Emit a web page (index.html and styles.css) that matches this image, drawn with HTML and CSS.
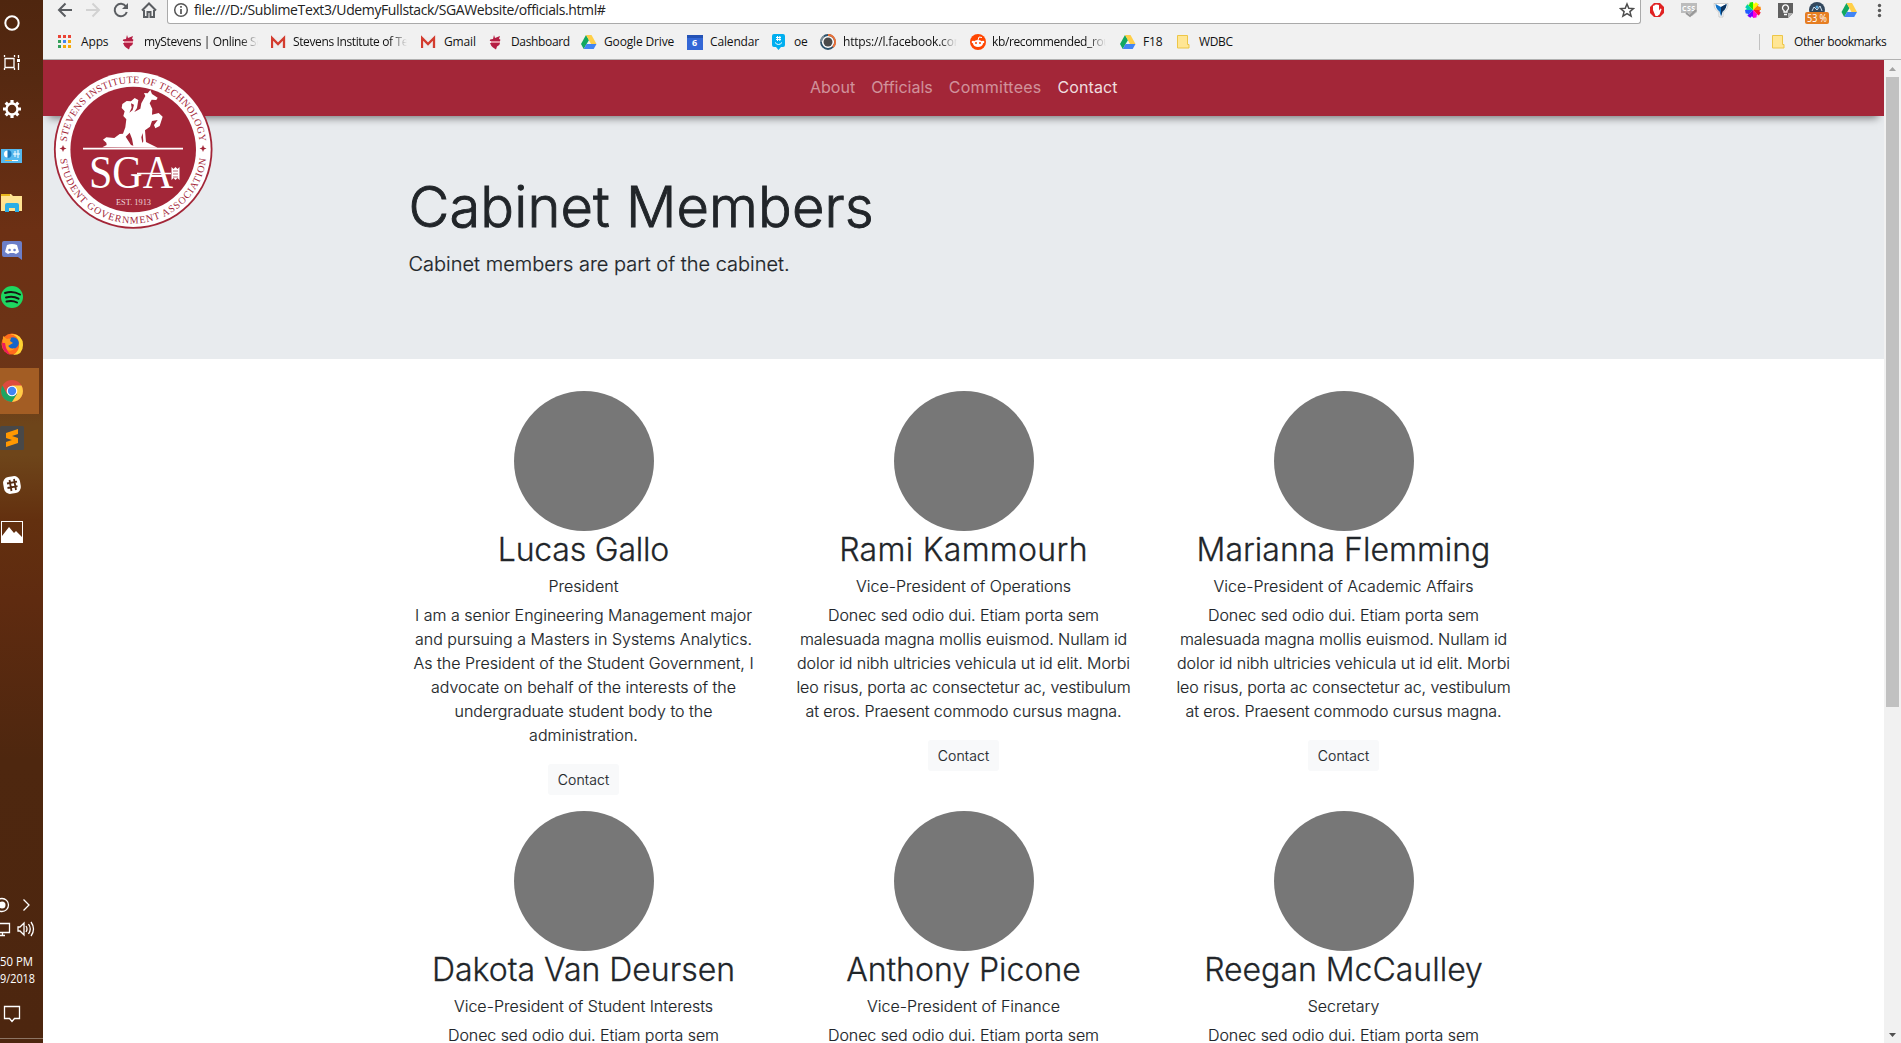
FILE: index.html
```html
<!DOCTYPE html>
<html lang="en"><head><meta charset="utf-8"><title>Officials</title><link rel="stylesheet" href="styles.css"></head>
<body>
<div class="screen">
<aside class="taskbar">
<svg width="43" height="1043" viewBox="0 0 43 1043">
<rect class="active" x="0" y="368" width="39" height="46"/><path d="M39.5 368v46" stroke="#6b3714"/>
<circle cx="12" cy="23" r="6.7" fill="none" stroke="#fff" stroke-width="2"/>
<g fill="none" stroke="#fff" stroke-width="1.3"><path d="M5 58.500h9v9h-9zM4.500 55v2M14.500 55v2M4.500 70v-2M14.500 70v-2M18.500 55v3M18.500 63v7"/></g><rect x="17" y="59" width="3" height="3" fill="#fff"/>
<g stroke="#fff" fill="none"><circle cx="12" cy="109" r="5.500" stroke-width="2.400"/><g stroke-width="3.200"><path d="M12 100v3M12 115v3M3 109h3M18 109h3M5.700 102.700l2 2M16.300 113.300l2 2M5.700 115.300l2-2M16.300 104.700l2-2"/></g></g>
<rect x="1" y="149" width="21" height="14" fill="#55b9ef"/><circle cx="7.500" cy="154" r="3.500" fill="#fff"/><path d="M7.500 154v-4a4 4 0 0 1 0 8z" fill="#1879be"/><path d="M13 154h7M15 151v6M18 150v8" stroke="#fff"/><path d="M5 160.500h7" stroke="#f0b545"/><path d="M12 160.500h6" stroke="#fff"/>
<path d="M1 194h10l2 2h9v15H1z" fill="#ffe391"/><path d="M1 194h9v2H1z" fill="#e8b71d"/><path d="M5 205q0-2 2-2h10q2 0 2 2v7h-4v-4H9v4H5z" fill="#2aaee6"/>
<path d="M4 241h16q2 0 2 2v17l-4-3H4q-2 0-2-2v-12q0-2 2-2z" fill="#6c7fc9"/><path d="M7 245q5-2 10 0l2 7-3 2-2-1H10l-2 1-3-2z" fill="#fff"/><path d="M9.500 250h.1M14.500 250h.1" stroke="#6c7fc9" stroke-width="2.500" stroke-linecap="round"/>
<circle cx="12" cy="297" r="11" fill="#1ed760"/><path d="M5 293q8-2.500 15 1.500M6 297.500q7-2 12.500 1.200M6.500 301.500q6-1.500 10.500 1" fill="none" stroke="#191414" stroke-width="2" stroke-linecap="round"/>
<circle cx="12" cy="344" r="10.500" fill="#ff6b1c"/><path d="M12 334q11 1 11 11t-10 10q7-4 6-12t-9-9z" fill="#ffd332"/><circle cx="13" cy="343" r="5.800" fill="#1465c8"/><path d="M3 336l4 3 4-1-1 3 3 2-5 3q2 4 7 2-4 5-9 1-4-4-3-13z" fill="#ff9a1c"/><path d="M2 343q0 10 9 12-5-4-6-12z" fill="#ed1c5c"/>
<g transform="translate(12 391)"><circle r="11" fill="#dd4b3e"/><path d="M-9.500-5.500A11 11 0 0 0 0 11L5 3-5 3z" fill="#1da462"/><path d="M0 11A11 11 0 0 0 9.500-5.500H0L5 3z" fill="#ffcd46"/><circle r="5.300" fill="#fff"/><circle r="4.200" fill="#4285f4"/></g>
<rect x="0" y="426" width="24" height="24" rx="1.500" fill="#484848"/><path d="M6 433l12-4v5l-6 2 6 2v5L6 447v-5l6-2-6-2z" fill="#ff9800"/>
<rect x="3.500" y="476.500" width="17" height="17" rx="6" fill="#fff" transform="rotate(-10 12 485)"/><path d="M9.500 480l2 11M14 479l2 11M7 483.500l10-1.800M7.500 488l10-1.800" stroke="#572c12" stroke-width="1.800"/>
<rect x="1.500" y="521.500" width="21" height="21" fill="none" stroke="#fff"/><path d="M2 536l7-9 5 6 2-2 6 6v5H2z" fill="#fff"/>
<g fill="none" stroke="#fff" stroke-width="1.300"><circle cx="2" cy="905" r="6.500"/><path d="M23.500 899.500l5.500 5.500-5.500 5.500M0 923.500h9.500v9H0M0 935.500h5M2.500 933v2M18 927h2l4-4v12l-4-4h-2zM26 926q2 3 0 6M28.500 924q3.500 5 0 10M31 922q5 7 0 14M4.500 1006.500h15v12h-5l-2.500 3-2.500-3h-5z"/></g><circle cx="2" cy="905" r="3.500" fill="#fff"/>
<path d="M0 1038.500h43" stroke="#8d7564"/>
<text class="clock" x="0" y="966" textLength="33" lengthAdjust="spacingAndGlyphs">50 PM</text><text class="clock" x="0" y="983" textLength="35" lengthAdjust="spacingAndGlyphs">9/2018</text>
</svg>
</aside>
<div class="browser">
<header class="chrome">
<div class="toolbar">
<svg class="navicons" width="124" height="24" viewBox="43 0 124 24" fill="none" stroke="#5a5d61" stroke-width="2"><path d="M72 10H60M65.500 3.500L59 10l6.500 6.500"/><path stroke="#d2d2d2" d="M86 10h12M92.500 3.500L99 10l-6.500 6.500"/><path d="M126 6.500a6.200 6.200 0 1 0 .8 5.500"/><path d="M128 3v6h-6z" fill="#5a5d61" stroke="none"/><path d="M142 10.500l7-7 7 7M144 10v7h3.500v-5h3v5h3.500v-7"/></svg>
<div class="omnibox"><svg width="16" height="20" viewBox="0 0 16 20"><circle cx="8" cy="10" r="6.300" fill="none" stroke="#555" stroke-width="1.500"/><path d="M8 9v5M8 6v1.700" stroke="#555" stroke-width="1.700"/></svg><span class="url">file:///D:/SublimeText3/UdemyFullstack/SGAWebsite/officials.html#</span><svg class="star" width="16" height="20" viewBox="0 0 16 20"><path d="M8 4l1.800 4.300 4.700.3-3.600 3 1.200 4.500L8 13.600l-4.100 2.500 1.200-4.500-3.600-3 4.700-.3z" fill="none" stroke="#4d4d4d" stroke-width="1.500"/></svg></div>
<svg width="260" height="24" viewBox="1641 0 260 24">
<path d="M1654 3h6l4 4v6l-4 4h-6l-4-4V7z" fill="#e02222"/><path d="M1653 10V6q1-1 1.500 0V5q1-1 1.500 0 1-1.500 1.700 0 1-.5 1.300.5v5l1.500-2q1 0 1 1l-2 5-2 1.500h-2z" fill="#fff"/>
<path d="M1681 3h16v9l-5 4-4-3h-7z" fill="#bcbcbc"/><text class="css" x="1682" y="10.500" textLength="13">CSS</text><path d="M1686 13l4 3 6-6" fill="none" stroke="#989898" stroke-width="2"/>
<path d="M1714 3.500h14q0 6-5 8.500v5h-4v-5q-5-2.500-5-8.500z" fill="#fff" stroke="#bbb" stroke-width=".7"/><path d="M1715.500 4l5.500 3 5.500-3q0 5-4 7.500l-1.500 5-1.500-5q-4-2.500-4-7.500z" fill="#1475c9"/><path d="M1721 7v9l1.500-4.500q4-2.500 4-7.500z" fill="#0b315c"/>
<g transform="translate(1753 10)"><path d="M0 0V-8A8 8 0 0 1 5.700-5.700z" fill="#fffb00"/><path d="M0 0L5.700-5.700A8 8 0 0 1 8 0z" fill="#ff8400"/><path d="M0 0h8a8 8 0 0 1-2.300 5.700z" fill="#ff1133"/><path d="M0 0l5.700 5.700A8 8 0 0 1 0 8z" fill="#ff00d5"/><path d="M0 0v8a8 8 0 0 1-5.700-2.300z" fill="#7600ff"/><path d="M0 0l-5.700 5.700A8 8 0 0 1-8 0z" fill="#1f5bff"/><path d="M0 0h-8a8 8 0 0 1 2.300-5.700z" fill="#00cfb0"/><path d="M0 0l-5.700-5.700A8 8 0 0 1 0-8z" fill="#25e500"/><circle r="7.500" fill="none" stroke="#f1f1f1" stroke-width="1.500" stroke-dasharray="2 3.890"/></g>
<path d="M1778 3h15v10l-5 5h-10z" fill="#606060"/><path d="M1788 18v-5h5z" fill="#b4b4b4"/><path d="M1784 12v-1.500a3 3 0 1 1 3 0V12zM1784 14.500h3" fill="none" stroke="#fff" stroke-width="1.300"/>
<circle cx="1817" cy="10" r="8" fill="#34495e"/><path d="M1812 11l2-4 3 3 3-4 2 5" fill="none" stroke="#cfe0ee"/><circle cx="1817" cy="7" r="1.500" fill="#5dade2"/><rect x="1805" y="12" width="24" height="12" rx="2" fill="#e67e22"/><text class="badge" x="1807" y="22" textLength="20" lengthAdjust="spacingAndGlyphs">53 %</text>
<g transform="translate(1841.500 2)"><path d="M5 1L0 10l2.700 5L8 6z" fill="#11a861"/><path d="M5 1h5.500l5 9H10z" fill="#ffcf48"/><path d="M5.500 10h10l-2.800 5h-10z" fill="#4285f4"/></g>
<g fill="#5a5a5a"><circle cx="1879.500" cy="5.500" r="1.700"/><circle cx="1879.500" cy="10.500" r="1.700"/><circle cx="1879.500" cy="15.500" r="1.700"/></g></svg>
</div>
<nav class="bookmarks">
<a><svg viewBox="0 0 16 16"><g fill="#ea4335"><path d="M0 1h3v3H0zM5 1h3v3H5zM10 1h3v3h-3z"/></g><path fill="#34a05a" d="M0 6h3v3H0zM0 11h3v3H0z"/><path fill="#4285f4" d="M5 6h3v3H5z"/><path fill="#f5a90b" d="M10 6h3v3h-3zM5 11h3v3H5zM10 11h3v3h-3z"/></svg><span>Apps</span></a>
<a><svg viewBox="0 0 16 16"><use href="#duck"/></svg><span class="fade">myStevens | Online Se</span></a>
<a><svg viewBox="0 0 16 16"><use href="#mail"/></svg><span class="fade">Stevens Institute of Te</span></a>
<a><svg viewBox="0 0 16 16"><use href="#mail"/></svg><span>Gmail</span></a>
<a><svg viewBox="0 0 16 16"><use href="#duck"/></svg><span class="tight">Dashboard</span></a>
<a><svg viewBox="0 0 16 16"><use href="#drive"/></svg><span>Google Drive</span></a>
<a><svg viewBox="0 0 16 16"><path fill="#3367d6" d="M0 1h16v15H0z"/><path fill="#2452b5" d="M0 1h16v3H0z"/><text class="cal" x="5" y="12">6</text></svg><span>Calendar</span></a>
<a><svg viewBox="0 0 16 16"><path fill="#00aff0" d="M3 0h9q2 0 2 2v9q0 2-2 2h-2l-2.500 3L5 13H3q-2 0-2-2V2q0-2 2-2z"/><path d="M6.500 2v5M8.800 2v5M5 3.500h5M5 5.500h5M4 8.500q3.500 4 7 0" stroke="#fff" fill="none"/></svg><span>oe</span></a>
<a><svg viewBox="0 0 16 16"><circle cx="8" cy="8" r="7" fill="#fff" stroke="#2d526b" stroke-width="1.800"/><path d="M8 1A7 7 0 0 1 13 13" fill="none" stroke="#ed7137" stroke-width="1.800"/><path d="M1 8a7 7 0 0 1 3-5.700" fill="none" stroke="#7b8d97" stroke-width="1.800"/><circle cx="8" cy="8" r="4.500" fill="#4b4b4b"/></svg><span class="fade link">https://l.facebook.com</span></a>
<a><svg viewBox="0 0 16 16"><circle cx="8" cy="8" r="8" fill="#ff4500"/><ellipse cx="8" cy="9.500" rx="5" ry="3.500" fill="#fff"/><path d="M8 6l1-3 3 .5" stroke="#fff" fill="none"/><circle cx="6" cy="9" r="1" fill="#ff4500"/><circle cx="10" cy="9" r="1" fill="#ff4500"/><circle cx="3" cy="8" r="1.300" fill="#fff"/><circle cx="13" cy="8" r="1.300" fill="#fff"/></svg><span class="fade">kb/recommended_rou</span></a>
<a><svg viewBox="0 0 16 16"><use href="#drive"/></svg><span>F18</span></a>
<a><svg viewBox="0 0 16 16"><use href="#folder"/></svg><span class="tight">WDBC</span></a>
<a class="other"><svg viewBox="0 0 16 16"><use href="#folder"/></svg><span>Other bookmarks</span></a>
</nav>
<svg class="defs"><defs><g id="duck"><path d="M5 1l1 3 5-2-1 3q2 0 1 2H1q-1-2 3-2z" fill="#b51e43"/><path d="M2 7h9v2H2z" fill="#e78d9e"/><path d="M1 9h10q0 2-3 3.500l-1 3-3-2Q2 12 1 9z" fill="#b51e43"/></g><g id="mail"><path d="M1 3h12v11H1z" fill="#eee"/><path d="M1 14V4l6 6 6-6v10" fill="none" stroke="#d33c2f" stroke-width="2.300"/></g><g id="drive"><path d="M5 1L0 10l2.700 5L8 6z" fill="#11a861"/><path d="M5 1h5.500l5 9H10z" fill="#ffcf48"/><path d="M5.500 10h10l-2.800 5h-10z" fill="#4285f4"/></g><g id="folder"><path d="M.5 1.500h10v9h1.500v3.500H.5z" fill="#ffe694" stroke="#edc647"/></g></defs></svg>
</header>
<div class="viewport"><main class="page">
<nav class="sitebar"><a>About</a><a>Officials</a><a class="wide">Committees</a><a class="on">Contact</a>
<svg class="logo" width="160" height="160" viewBox="53 71 160 160"><defs><path id="arcTop" d="M66.200 151a67 67 0 0 1 134 0"/><path id="arcBottom" d="M59.700 151a73.500 73.500 0 0 0 147 0"/></defs><circle cx="133.200" cy="150.500" r="79.300" fill="#a32638"/><circle cx="133.200" cy="150.500" r="77.500" fill="#fff"/><circle cx="133.200" cy="150.500" r="62.800" fill="#a32638"/>
<text class="ring"><textPath href="#arcTop" startOffset="8" textLength="194">STEVENS INSTITUTE OF TECHNOLOGY</textPath></text><text class="ring"><textPath href="#arcBottom" startOffset="9" textLength="213">STUDENT GOVERNMENT ASSOCIATION</textPath></text>
<path d="M63 146l1 2.500 2.500 1-2.500 1-1 2.500-1-2.500-2.500-1 2.500-1zM203 146l1 2.500 2.500 1-2.500 1-1 2.500-1-2.500-2.500-1 2.500-1z" fill="#a32638"/>
<g transform="translate(95 85) scale(.3333)" fill="#fff"><path d="M22 190L35 183 34 176 24 167 34 160 58 162 74 150 84 149 91 130 94 106 85 96 89 82 80 72 82 60 95 51 108 52 119 42 130 48 126 72 118 84 136 74 139 58 151 36 147 27 158 28 166 18 171 30 188 41 184 48 170 47 164 58 172 75 171 92 191 87 203 98 194 126 181 133 177 123 188 108 171 111 165 128 150 139 153 174 188 191z"/><path d="M108 58l9 4-4 16-10 8 7-15zM92 158l12-12 7 18 4 21-7-2zM139 160l4-13 2 25-3 5z" fill="#a32638"/></g><path d="M83 148.800h100v1.800H83z" fill="#fff"/>
<text class="sga" x="89" y="188.500" textLength="84" lengthAdjust="spacingAndGlyphs">SGA</text><path d="M137 174.500h34" stroke="#fff" stroke-width="1.500"/><path d="M171.500 168l2 2 2-2 2 2 2-2v13l-2-2-2 2-2-2-2 2z" fill="#fff"/><path d="M173 172h5M173 175h5M173 178h5" stroke="#a32638" stroke-width=".7"/><text class="est" x="116" y="206" textLength="35" lengthAdjust="spacingAndGlyphs">EST. 1913</text></svg></nav>
<section class="hero"><div class="container"><h1>Cabinet Members</h1><p>Cabinet members are part of the cabinet.</p></div></section>
<section class="container members">
<article><div class="avatar"></div><h2 class="narrow">Lucas Gallo</h2><p>President</p><p class="bio">I am a senior Engineering Management major<br>and pursuing a Masters in Systems Analytics.<br>As the President of the Student Government, I<br>advocate on behalf of the interests of the<br>undergraduate student body to the<br>administration.</p><a class="btn">Contact</a></article>
<article><div class="avatar"></div><h2 class="loose">Rami Kammourh</h2><p>Vice-President of Operations</p><p class="bio filler">Donec sed odio dui. Etiam porta sem<br>malesuada magna mollis euismod. Nullam id<br>dolor id nibh ultricies vehicula ut id elit. Morbi<br>leo risus, porta ac consectetur ac, vestibulum<br>at eros. Praesent commodo cursus magna.</p><a class="btn">Contact</a></article>
<article><div class="avatar"></div><h2>Marianna Flemming</h2><p>Vice-President of Academic Affairs</p><p class="bio filler">Donec sed odio dui. Etiam porta sem<br>malesuada magna mollis euismod. Nullam id<br>dolor id nibh ultricies vehicula ut id elit. Morbi<br>leo risus, porta ac consectetur ac, vestibulum<br>at eros. Praesent commodo cursus magna.</p><a class="btn">Contact</a></article>
<article><div class="avatar"></div><h2>Dakota Van Deursen</h2><p>Vice-President of Student Interests</p><p class="bio filler">Donec sed odio dui. Etiam porta sem</p></article>
<article><div class="avatar"></div><h2>Anthony Picone</h2><p>Vice-President of Finance</p><p class="bio filler">Donec sed odio dui. Etiam porta sem</p></article>
<article><div class="avatar"></div><h2>Reegan McCaulley</h2><p>Secretary</p><p class="bio filler">Donec sed odio dui. Etiam porta sem</p></article>
</section></main>
<div class="scroll"><svg width="17" height="17"><path d="M5 11l3.500-4 3.500 4z" fill="#a3a3a3"/></svg><div class="thumb"></div><svg width="17" height="17"><path d="M5 7l3.500 4L12 7z" fill="#505050"/></svg></div></div>
</div></div></body></html>
```
FILE: styles.css
```css
* { box-sizing: border-box; }
body { margin: 0; overflow: hidden; font-family: Inter, sans-serif; color: #212529; }
.screen { display: flex; height: 1043px; width: 1901px; }
.taskbar { width: 43px; background: linear-gradient(#4f260f 0, #562911 80px, #6c3014 230px, #6c3517 380px, #6e451a 425px, #6e451a 455px, #63300f 520px, #5f2b10 600px, #4e270f 760px, #4d260f 1043px); }
.taskbar svg { display: block; }
.active { fill: #a35d24; }
.clock { font: 12px "Open Sans", sans-serif; fill: #fff; }
.browser { flex: 1; min-width: 0; display: flex; flex-direction: column; }
.chrome { height: 60px; background: #f1f1f1; border-bottom: 1px solid #b1b1b1; font-family: "Open Sans", sans-serif; }
.toolbar { display: flex; height: 24px; }
.omnibox { flex: 1; display: flex; background: #fff; border: 1px solid #aaa; border-top: 0; border-radius: 0 0 3px 3px; padding: 0 5px; height: 24px; }
.url { font-size: 14px; line-height: 20px; margin-left: 5px; color: #222; letter-spacing: -.38px; flex: 1; white-space: nowrap; }
.css { font: bold 7px "Open Sans", sans-serif; fill: #fff; }
.badge { font: 10px "Open Sans", sans-serif; fill: #fff; }
.cal { font: bold 9px "Open Sans", sans-serif; fill: #fff; }
.bookmarks { display: grid; height: 35px; padding-left: 15px; grid-template-columns: 64px 149px 150px 68px 92px 106px 84px 49px 150px 150px 57px 582px 127px; }
.bookmarks a { display: flex; align-items: center; min-width: 0; position: relative; }
.bookmarks svg { width: 16px; height: 16px; margin-right: 7px; flex: none; }
.bookmarks span { font-size: 12px; letter-spacing: -.15px; white-space: nowrap; color: #111; }
.bookmarks .tight { letter-spacing: -.35px; margin-left: -1px; }
.bookmarks .fade { width: 114px; overflow: hidden; letter-spacing: -.38px; margin-left: -1px; -webkit-mask-image: linear-gradient(90deg, #000 85%, transparent); mask-image: linear-gradient(90deg, #000 85%, transparent); }
.bookmarks .link { letter-spacing: -.18px; margin-left: 0; }
.bookmarks .other { padding-left: 13px; }
.bookmarks .other span { letter-spacing: -.42px; margin-left: -1px; }
.bookmarks .other::before { content: ""; position: absolute; left: 0; top: 10px; height: 16px; border-left: 1px solid #c2c2c2; }
.defs { position: absolute; width: 0; height: 0; }
.viewport { display: flex; height: 983px; }
.page { width: 1841px; background: #fff; overflow: hidden; }
.sitebar { position: relative; z-index: 1; height: 56px; background: #a32638; display: flex; gap: 16px; padding-left: 767px; line-height: 54px; font-size: 16px; color: rgba(255,255,255,.5); box-shadow: 0 8px 8px -6px rgba(0,0,0,.5); }
.sitebar .wide { letter-spacing: .25px; }
.sitebar .on { color: rgba(255,255,255,.85); letter-spacing: .1px; }
.logo { position: absolute; left: 10px; top: 10px; }
.ring { font: 10px "Liberation Serif", serif; fill: #a32638; }
.sga { font: 46px "Liberation Serif", serif; fill: #fff; }
.est { font: 8.500px "Liberation Serif", serif; fill: #eed5d9; }
.container { width: 1140px; margin: 0 auto; }
.hero { height: 243px; background: #e8ebee; padding-top: 58px; }
.hero .container { padding-left: 15px; }
h1, h2, p { margin: 0; white-space: nowrap; }
h1 { font-size: 56px; font-weight: 300; line-height: 67px; letter-spacing: .15px; -webkit-text-stroke: .9px #212529; }
.hero p { font-size: 20px; font-weight: 300; line-height: 30px; margin-top: 8px; -webkit-text-stroke: .2px #212529; }
.members { display: grid; grid-template-columns: repeat(3, 380px); grid-template-rows: 420px 420px; padding-top: 32px; text-align: center; font-weight: 300; }
article { display: flex; flex-direction: column; align-items: center; }
.avatar { width: 140px; height: 140px; border-radius: 50%; background: #777; }
h2 { font-size: 32px; line-height: 38px; font-weight: 300; -webkit-text-stroke: .3px #212529; }
.narrow { letter-spacing: -.2px; }
.loose { letter-spacing: .3px; }
article p { font-size: 16px; line-height: 24px; margin-top: 5px; -webkit-text-stroke: .15px #212529; }
.filler { letter-spacing: -.07px; }
.btn { margin-top: 17px; background: #f8f9fa; border-radius: 3px; font-size: 14px; line-height: 31px; width: 71px; height: 31px; letter-spacing: .15px; -webkit-text-stroke: .15px #212529; }
.scroll { width: 17px; background: #f1f1f1; display: flex; flex-direction: column; }
.thumb { height: 630px; width: 13px; margin: 0 2px auto; background: #c1c1c1; }
```
